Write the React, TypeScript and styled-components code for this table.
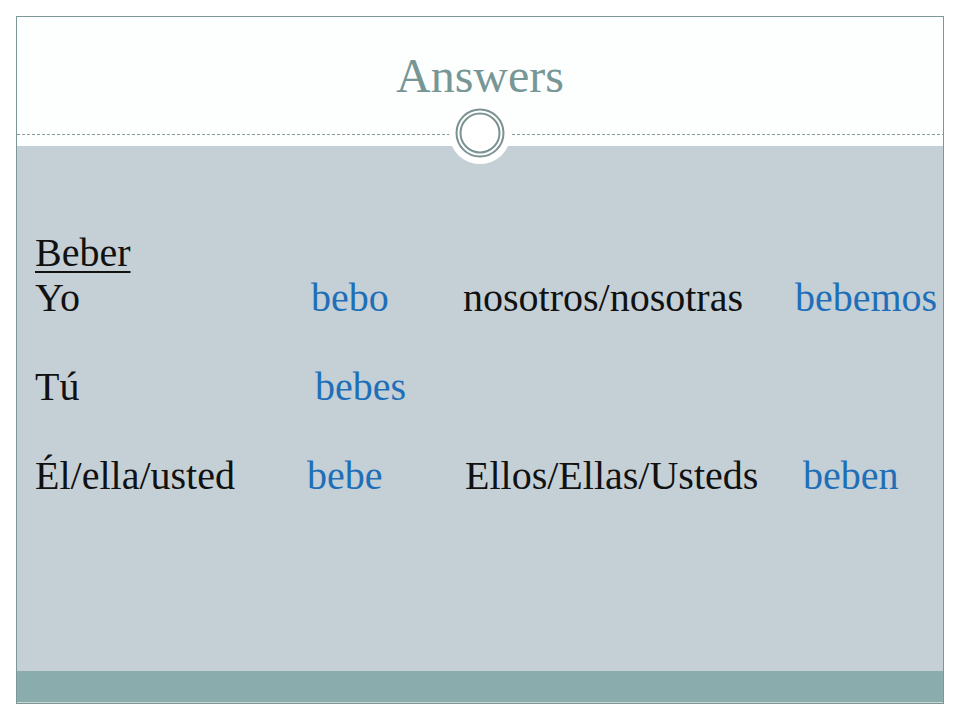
import React from "react";
import styled, { createGlobalStyle } from "styled-components";

const Global = createGlobalStyle`
  html, body { margin: 0; padding: 0; background: #ffffff; }
  body { font-family: "Liberation Serif", "Times New Roman", serif; }
`;

const Slide = styled.div`
  box-sizing: border-box;
  margin: 16px 0 0 16px;
  width: 928px;
  height: 688px;
  border: 1px solid #7d9797;
  display: flex;
  flex-direction: column;
  background: #ffffff;
  overflow: hidden;
`;

const Header = styled.header`
  position: relative;
  height: 129px;
  flex: none;
  background: #fdfefe;
  display: flex;
  flex-direction: column;
  align-items: center;
`;

const Title = styled.h1`
  margin: 35px 0 0 0;
  font-family: "Liberation Serif", "Times New Roman", serif;
  font-weight: normal;
  font-size: 48px;
  line-height: 48px;
  color: #779696;
`;

const Dashes = styled.div`
  position: absolute;
  left: 0;
  right: 0;
  top: 117px;
  height: 1px;
  background: repeating-linear-gradient(
    to right,
    #8c9c9c 0 3px,
    transparent 3px 5px
  );
`;

const Medallion = styled.div`
  position: absolute;
  left: 432px;
  top: 85px;
  width: 62px;
  height: 62px;
  border-radius: 50%;
  background: #ffffff;
  z-index: 2;
  display: flex;
  align-items: center;
  justify-content: center;
`;

const Content = styled.main`
  flex: 1;
  background: #c5d0d6;
  padding: 85px 0 0 18px;
  font-size: 40px;
  line-height: 44.5px;
  color: #111111;
`;

const Row = styled.div`
  display: flex;
  height: 44.5px;
  white-space: nowrap;
`;

const Cell = styled.span<{ $w?: number; $answer?: boolean; $under?: boolean }>`
  flex: none;
  width: ${(p) => (p.$w ? `${p.$w}px` : "auto")};
  color: ${(p) => (p.$answer ? "#1f6fb8" : "#111111")};
  text-decoration: ${(p) => (p.$under ? "underline" : "none")};
  text-decoration-thickness: 2px;
  text-underline-offset: 5px;
`;

const Footer = styled.footer`
  flex: none;
  height: 31px;
  background: #8aacac;
  border-bottom: 1px solid #c8d6d6;
`;

function Rings() {
  return (
    <svg width="52" height="52" viewBox="0 0 52 52">
      <circle cx="26" cy="26" r="23.5" fill="none" stroke="#7a9292" strokeWidth="2" />
      <circle cx="26" cy="26" r="19.5" fill="none" stroke="#7a9292" strokeWidth="2" />
    </svg>
  );
}

export default function App() {
  return (
    <>
      <Global />
      <Slide>
        <Header>
          <Title>Answers</Title>
          <Dashes />
          <Medallion>
            <Rings />
          </Medallion>
        </Header>
        <Content>
          <Row>
            <Cell $under>Beber</Cell>
          </Row>
          <Row>
            <Cell $w={276}>Yo</Cell>
            <Cell $w={152} $answer>bebo</Cell>
            <Cell $w={332}>nosotros/nosotras</Cell>
            <Cell $answer>bebemos</Cell>
          </Row>
          <Row />
          <Row>
            <Cell $w={280}>Tú</Cell>
            <Cell $answer>bebes</Cell>
          </Row>
          <Row />
          <Row>
            <Cell $w={272}>Él/ella/usted</Cell>
            <Cell $w={158} $answer>bebe</Cell>
            <Cell $w={338}>Ellos/Ellas/Usteds</Cell>
            <Cell $answer>beben</Cell>
          </Row>
        </Content>
        <Footer />
      </Slide>
    </>
  );
}
